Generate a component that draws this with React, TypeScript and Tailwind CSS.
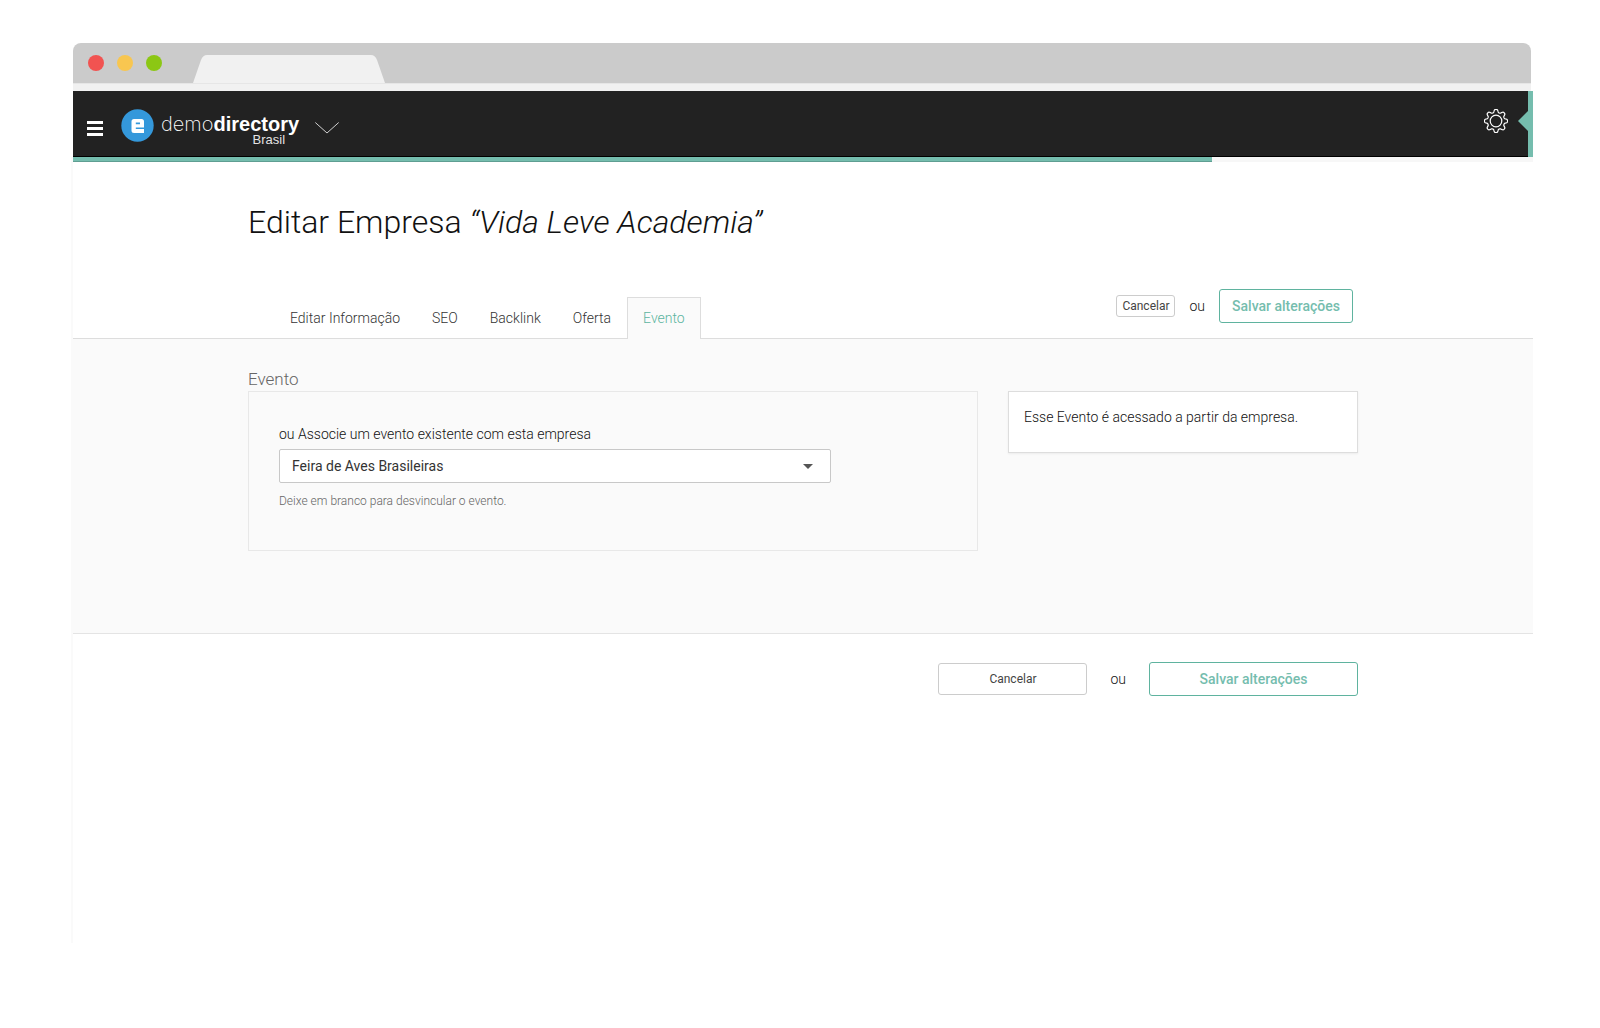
import { useState } from "react";

const tabs = ["Editar Informação", "SEO", "Backlink", "Oferta", "Evento"];

const BrowserBar = () => (
  <div className="mr-[2px]">
    <div className="flex h-[40px] items-end rounded-t-lg bg-[#cbcbcb]">
      <div className="flex h-full items-center gap-[13px] pl-[15px]">
        <span className="size-4 rounded-full bg-[#f15351]"></span>
        <span className="size-4 rounded-full bg-[#f8c650]"></span>
        <span className="size-4 rounded-full bg-[#8cc714]"></span>
      </div>
      <svg className="ml-[31px]" width="192" height="28" viewBox="0 0 192 28">
        <path d="M0 28 L8 5 Q10 0 14 0 H178 Q182 0 184 5 L192 28 Z" fill="#f1f1f1" />
      </svg>
    </div>
    <div className="h-[8px] border-t border-[#e6e6e6] bg-[#f1f1f1]"></div>
  </div>
);

const Logo = () => (
  <a href="#" className="flex items-start text-white">
    <svg className="mt-[18px]" width="33" height="33" viewBox="0 0 33 33">
      <circle cx="16.5" cy="16.5" r="16.2" fill="#3498db" />
      <path
        d="M13 10 H20.500 Q23 10 23 12.500 V18.500 H14.800 V20 H23 V24 H13 Q10.500 24 10.500 21.500 V12.500 Q10.500 10 13 10 Z M14.800 13.600 V15.200 H19 V13.600 Z"
        fill="#fff"
        fillRule="evenodd"
      />
    </svg>
    <span className="ml-[7px] mt-[21px] flex flex-col font-['Liberation_Sans',sans-serif]">
      <span className="text-[20px] leading-[24px]">
        <span className="font-['Inter',sans-serif] font-extralight">demo</span>
        <span className="font-bold">directory</span>
      </span>
      <span className="pr-[14px] text-right text-[13px] leading-[7px] text-[#e4e4e4]">Brasil</span>
    </span>
  </a>
);

// eight rounded teeth around a ring
const gearPath = () => {
  let d = "";
  for (let i = 0; i < 160; i++) {
    const a = (i / 160) * Math.PI * 2;
    const wave = Math.cos(a * 8);
    const r = 10.1 + 1.5 * Math.tanh(wave * 1.8);
    d += `${i ? "L" : "M"}${(12 + r * Math.sin(a)).toFixed(2)} ${(12 - r * Math.cos(a)).toFixed(2)}`;
  }
  return d + "Z";
};

const Header = () => (
  <header className="flex h-[66px] bg-[#222222]">
    <div className="flex flex-1 items-start border-b border-black pl-[14px]">
      <button type="button" aria-label="Menu" className="mt-[30px] flex w-[16px] flex-col gap-[3px]">
        <span className="h-[3px] w-full bg-white"></span>
        <span className="h-[3px] w-full bg-white"></span>
        <span className="h-[3px] w-full bg-white"></span>
      </button>
      <div className="ml-[18px]">
        <Logo />
      </div>
      <button type="button" aria-label="Trocar site" className="ml-[16px] mt-[31px]">
        <svg width="24" height="12" viewBox="0 0 24 12" fill="none" stroke="#d0d0d0">
          <path d="M0.300 0.500 L12 11 L23.700 0.500" />
        </svg>
      </button>
      <button type="button" aria-label="Configurações" className="ml-auto mt-[18px]">
        <svg width="24" height="24" viewBox="0 0 24 24" fill="none" stroke="#fff" strokeWidth="1.2">
          <path d={gearPath()} />
          <circle cx="12" cy="12" r="5.800" />
        </svg>
      </button>
      <svg className="ml-[10px] mt-[20px]" width="10" height="20" viewBox="0 0 10 20">
        <path d="M10 0 L0 10 L10 20 Z" fill="#75bdae" />
      </svg>
    </div>
    <div className="w-[5px] bg-[#75bdae]"></div>
  </header>
);

const saveButton =
  "h-[34px] rounded-[3px] border border-[#5fb39f] bg-white text-[14px] font-medium text-[#75bdae]";
const cancelButton =
  "rounded-[3px] border border-[#cccccc] bg-white text-[12px] font-normal text-[#444444]";

const App = () => {
  const [active, setActive] = useState("Evento");
  const [evento, setEvento] = useState("Feira de Aves Brasileiras");

  return (
    <div className="pb-[84px] pl-[71px] pr-[67px] pt-[43px] font-['Roboto',sans-serif] text-[14px] font-light text-[#111111]">
      <div className="pl-[2px]">
        <BrowserBar />
        <Header />
      </div>

      <main className="min-h-[786px] border-l-2 border-[#fafafa] bg-white">
        <div className="h-[5px] bg-[#f7f7f7]">
          <div className="h-full w-[78%] border-b border-[#5f9e92] bg-[#75bdae]"></div>
        </div>

        <div className="border-b border-[#dddddd]">
          <div className="mx-auto max-w-[1110px]">
            <h1 className="pt-[40px] text-[32px] font-light leading-[40px]">
              Editar Empresa <em>“Vida Leve Academia”</em>
            </h1>
            <div className="flex items-start justify-between pt-[47px]">
              <nav className="-mb-px mt-[8px] flex pl-[26px]">
                {tabs.map((tab) => (
                  <a
                    key={tab}
                    href="#"
                    onClick={() => setActive(tab)}
                    className={
                      tab === active
                        ? "border border-b-0 border-[#dddddd] bg-[#fafafa] px-[15px] pb-[1px] leading-[40px] text-[#5cb5a0]"
                        : "border border-b-0 border-transparent px-[15px] leading-[40px] text-[#333333]"
                    }
                  >
                    {tab}
                  </a>
                ))}
              </nav>
              <div className="flex items-center pr-[5px]">
                <button type="button" className={`${cancelButton} h-[22px] w-[59px]`}>
                  Cancelar
                </button>
                <span className="px-[14px]">ou</span>
                <button type="button" className={`${saveButton} w-[134px]`}>
                  Salvar alterações
                </button>
              </div>
            </div>
          </div>
        </div>

        <section className="border-b border-[#e4e4e4] bg-[#fafafa] pb-[82px] pt-[28px]">
          <div className="mx-auto max-w-[1110px]">
            <h2 className="text-[17px] font-light leading-[24px] text-[#666666]">Evento</h2>
            <div className="flex items-start gap-[30px]">
              <div className="flex h-[160px] flex-1 flex-col items-start border border-[#e8e8e8] px-[30px] pt-[32px]">
                <label htmlFor="evento" className="leading-[20px]">
                  ou Associe um evento existente com esta empresa
                </label>
                <div className="mt-[5px] grid w-full max-w-[552px] items-center">
                  <select
                    id="evento"
                    value={evento}
                    onChange={(e) => setEvento(e.target.value)}
                    className="col-start-1 row-start-1 h-[34px] w-full appearance-none rounded-[2px] border border-[#c8c8c8] bg-white px-[12px] text-[14px] font-normal text-[#333333]"
                  >
                    <option>Feira de Aves Brasileiras</option>
                    <option value=""></option>
                  </select>
                  <svg
                    className="pointer-events-none col-start-1 row-start-1 mr-[18px] justify-self-end"
                    width="10"
                    height="5"
                    viewBox="0 0 10 5"
                  >
                    <path d="M0 0 H10 L5 5 Z" fill="#555" />
                  </svg>
                </div>
                <p className="mt-[8px] text-[12px] leading-[20px] text-[#666666]">
                  Deixe em branco para desvincular o evento.
                </p>
              </div>
              <aside className="h-[62px] w-[350px] border border-[#dddddd] bg-white px-[15px] pt-[15px] leading-[20px] shadow-[0_1px_2px_rgba(0,0,0,0.06)]">
                Esse Evento é acessado a partir da empresa.
              </aside>
            </div>
          </div>
        </section>

        <div className="mx-auto flex max-w-[1110px] items-center justify-end pt-[28px]">
          <button type="button" className={`${cancelButton} h-[32px] w-[149px]`}>
            Cancelar
          </button>
          <span className="px-[23px]">ou</span>
          <button type="button" className={`${saveButton} w-[209px]`}>
            Salvar alterações
          </button>
        </div>
      </main>
    </div>
  );
};

export default App;
